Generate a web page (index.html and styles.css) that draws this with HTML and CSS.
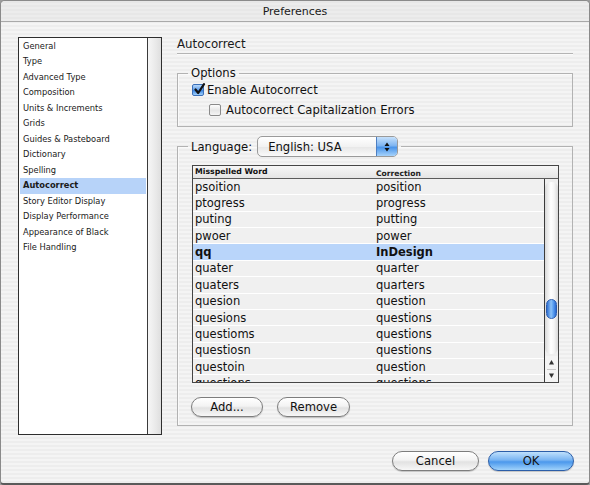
FILE: index.html
```html
<!DOCTYPE html>
<html>
<head>
<meta charset="utf-8">
<link rel="stylesheet" href="styles.css">
</head>
<body>
<div class="window">
  <div class="titlebar">Preferences</div>
  <div class="content">
    <div class="main">
      <div class="sidebar">
        <ul class="navlist">
          <li>General</li>
          <li>Type</li>
          <li>Advanced Type</li>
          <li>Composition</li>
          <li>Units &amp; Increments</li>
          <li>Grids</li>
          <li>Guides &amp; Pasteboard</li>
          <li>Dictionary</li>
          <li>Spelling</li>
          <li class="selected">Autocorrect</li>
          <li>Story Editor Display</li>
          <li>Display Performance</li>
          <li>Appearance of Black</li>
          <li>File Handling</li>
        </ul>
        <div class="sidescroll"></div>
      </div>
      <div class="panel">
        <div class="panel-title">Autocorrect</div>
        <fieldset class="group options">
          <legend class="legend-text">Options</legend>
          <div class="check-row">
            <span class="checkbox checked">
              <svg width="13" height="13" viewBox="0 0 13 13"><path d="M2.5 6.5 L5.2 10 L11 1.2" fill="none" stroke="#111" stroke-width="2.2" stroke-linecap="round" stroke-linejoin="round"/></svg>
            </span>
            <span>Enable Autocorrect</span>
          </div>
          <div class="check-row sub">
            <span class="checkbox"></span>
            <span>Autocorrect Capitalization Errors</span>
          </div>
        </fieldset>
        <fieldset class="group lang">
          <legend class="lang-legend">
            <span class="lang-label">Language:</span>
            <span class="select">
              <span class="select-text">English: USA</span>
              <span class="select-arrows">
                <svg width="8" height="12" viewBox="0 0 8 12"><path d="M4 1.5 L6.5 5 L1.5 5 Z M4 10.5 L6.5 7 L1.5 7 Z" fill="#111"/></svg>
              </span>
            </span>
          </legend>
          <div class="table">
            <div class="thead">
              <span class="col1">Misspelled Word</span>
              <span class="col2">Correction</span>
            </div>
            <div class="tbody">
              <div class="rows">
                <div class="row"><span class="col1">psoition</span><span class="col2">position</span></div>
                <div class="row"><span class="col1">ptogress</span><span class="col2">progress</span></div>
                <div class="row"><span class="col1">puting</span><span class="col2">putting</span></div>
                <div class="row"><span class="col1">pwoer</span><span class="col2">power</span></div>
                <div class="row active"><span class="col1">qq</span><span class="col2">InDesign</span></div>
                <div class="row"><span class="col1">quater</span><span class="col2">quarter</span></div>
                <div class="row"><span class="col1">quaters</span><span class="col2">quarters</span></div>
                <div class="row"><span class="col1">quesion</span><span class="col2">question</span></div>
                <div class="row"><span class="col1">quesions</span><span class="col2">questions</span></div>
                <div class="row"><span class="col1">questioms</span><span class="col2">questions</span></div>
                <div class="row"><span class="col1">questiosn</span><span class="col2">questions</span></div>
                <div class="row"><span class="col1">questoin</span><span class="col2">question</span></div>
                <div class="row"><span class="col1">questions</span><span class="col2">questions</span></div>
              </div>
              <div class="vscroll">
                <div class="track">
                  <div class="thumb"></div>
                </div>
                <div class="arrows">
                  <svg width="13" height="26" viewBox="0 0 13 26"><path d="M6.5 4 L9 8.5 L4 8.5 Z" fill="#333"/><path d="M2 13.5 H11" stroke="#c8c8c8" stroke-width="1"/><path d="M6.5 22 L9 17.5 L4 17.5 Z" fill="#333"/></svg>
                </div>
              </div>
            </div>
          </div>
          <div class="btn-row">
            <button class="aqua small">Add...</button>
            <button class="aqua small">Remove</button>
          </div>
        </fieldset>
      </div>
    </div>
    <div class="footer">
      <button class="aqua wide">Cancel</button>
      <button class="aqua wide default">OK</button>
    </div>
  </div>
</div>
</body>
</html>
```

FILE: styles.css
```css
* { box-sizing: border-box; }
html, body { margin: 0; padding: 0; }
body {
  width: 590px;
  height: 485px;
  overflow: hidden;
  background: #9c9c9c;
  font-family: "DejaVu Sans", "Liberation Sans", sans-serif;
  color: #111;
}
.window {
  width: 590px;
  height: 485px;
  border-radius: 5px 5px 4px 4px;
  border: 1px solid #8a8a8a;
  border-bottom: 2px solid #5a5a5a;
  background: repeating-linear-gradient(#ededed 0 2px, #f4f4f4 2px 4px);
  display: flex;
  flex-direction: column;
  overflow: hidden;
}
.titlebar {
  height: 21px;
  flex: none;
  text-align: center;
  font-size: 11px;
  line-height: 21px;
  color: #1a1a1a;
  background: repeating-linear-gradient(#e7e7e7 0 2px, #ececec 2px 4px);
  border-bottom: 1px solid #a9a9a9;
}
.content {
  flex: 1;
  display: flex;
  flex-direction: column;
}
.main {
  display: flex;
  padding: 15px 0 0 17px;
}
.sidebar {
  width: 144px;
  height: 398px;
  border: 1px solid #2e2e2e;
  background: #fff;
  display: flex;
  flex: none;
}
.navlist {
  list-style: none;
  margin: 0;
  padding: 0.5px 1px 0 1px;
  width: 129px;
  border-right: 1px solid #3a3a3a;
}
.navlist li {
  height: 15.5px;
  line-height: 15.5px;
  font-size: 8.3px;
  padding-left: 3px;
  color: #1a1a1a;
  white-space: nowrap;
}
.navlist li.selected {
  background: #b7d3f9;
  font-weight: bold;
}
.sidescroll {
  flex: 1;
  background: linear-gradient(90deg, #f6f6f6, #e9e9e9 60%, #dedede);
}
.panel {
  margin-left: 15px;
  width: 396px;
  display: flex;
  flex-direction: column;
}
.panel-title {
  height: 17px;
  font-size: 11.8px;
  line-height: 14px;
  border-bottom: 1px solid #b4b4b4;
  box-shadow: 0 1px 0 #fafafa;
  color: #1a1a1a;
}
.group {
  margin: 0;
  padding: 0 14px;
  border: 1px solid #b2b2b2;
  box-shadow: inset 1px 1px 0 #fafafa;
  min-width: 0;
}
.options {
  margin-top: 12px;
  padding-bottom: 6px;
}
.legend-text {
  font-size: 11.6px;
  line-height: 14px;
  padding: 0 3px;
  margin-left: -4px;
}
.check-row {
  display: flex;
  align-items: center;
  height: 20px;
  font-size: 11.6px;
  gap: 3px;
  padding-left: 0;
}
.check-row.sub {
  padding-left: 17px;
  gap: 5px;
}
.checkbox {
  width: 12px;
  height: 12px;
  border: 1px solid #8a8a8a;
  border-radius: 2px;
  background: linear-gradient(#fdfdfd, #e6e6e6 55%, #f4f4f4);
  position: relative;
  flex: none;
}
.checkbox.checked {
  border-color: #3b6fb8;
  background: linear-gradient(#b6d8fb, #5f9de9 50%, #3d86e3 55%, #9fd0fb);
}
.checkbox svg {
  position: absolute;
  left: 0;
  top: -2px;
}
.lang {
  margin-top: 9px;
  padding-bottom: 10px;
  height: 290px;
}
.lang-legend {
  display: flex;
  align-items: center;
  padding: 0 3px;
  margin-left: -4px;
  gap: 5px;
}
.lang-label {
  font-size: 11.6px;
}
.select {
  display: flex;
  align-items: center;
  width: 141px;
  height: 21px;
  border: 1px solid #9a9a9a;
  border-radius: 5px;
  background: linear-gradient(#ffffff, #f2f2f2 50%, #e8e8e8 55%, #fafafa);
  overflow: hidden;
}
.select-text {
  flex: 1;
  font-size: 11.6px;
  padding-left: 10px;
}
.select-arrows {
  width: 21px;
  height: 100%;
  display: flex;
  align-items: center;
  justify-content: center;
  border-left: 1px solid #4d7fc2;
  background: linear-gradient(#c6e1fc, #7fb5f1 45%, #4b95ea 55%, #a7d3fb);
}
.table {
  margin-top: 8px;
  border: 1px solid #454545;
  width: 367px;
}
.thead {
  height: 13px;
  display: flex;
  background: linear-gradient(#f6f6f6, #e4e4e4);
  border-bottom: 1px solid #5a5a5a;
  font-size: 7.8px;
  line-height: 12px;
  position: relative;
}
.thead .col1 {
  width: 183px;
  font-weight: bold;
  padding-left: 2px;
}
.thead .col2 {
  padding-top: 2px;
  line-height: 12px;
  font-weight: bold;
  font-size: 7.6px;
  color: #222;
}
.tbody {
  display: flex;
  height: 203px;
}
.rows {
  flex: 1;
  overflow: hidden;
  background: #f3f3f3;
}
.row {
  display: flex;
  height: 16.36px;
  align-items: center;
  font-size: 11.5px;
  background: #f0f0f0;
  border-bottom: 1.5px solid #fff;
}
.row .col1 {
  width: 183px;
  padding-left: 2px;
}
.row.active {
  background: #b9d5fa;
  font-weight: bold;
}
.vscroll {
  width: 14px;
  border-left: 1px solid #3a3a3a;
  background: #efefef;
  display: flex;
  flex-direction: column;
}
.track {
  flex: 1;
  margin: 3px 0 2px;
  border-radius: 6px;
  background: linear-gradient(90deg, #d9d9d9, #ffffff 45%, #f5f5f5 70%, #d9d9d9);
  position: relative;
}
.thumb {
  position: absolute;
  left: 1px;
  right: 1px;
  top: 117px;
  height: 20px;
  border-radius: 6px;
  border: 1px solid #2d5eb0;
  background: linear-gradient(90deg, #2f6fd2, #8cc2f7 45%, #5a9ef0 70%, #2b6ad0);
}
.arrows {
  height: 26px;
  flex: none;
  background: #f4f4f4;
}
.arrows svg { display: block; }
.btn-row {
  display: flex;
  gap: 14px;
  margin-top: 14px;
  margin-left: -1px;
}
.aqua {
  font-family: "DejaVu Sans", "Liberation Sans", sans-serif;
  font-size: 11.6px;
  color: #111;
  height: 20px;
  padding: 0;
  border: 1px solid #7d7d7d;
  border-radius: 10px;
  background: linear-gradient(#ffffff, #f3f3f3 45%, #e2e2e2 55%, #f7f7f7);
  box-shadow: 0 1px 1px rgba(0,0,0,0.2);
}
.aqua.small { width: 72px; }
.aqua.small + .aqua.small { width: 73px; }
.footer {
  display: flex;
  justify-content: flex-end;
  gap: 9px;
  padding: 16px 15px 0 0;
}
.aqua.wide { width: 87px; }
.aqua.default {
  width: 86px;
  border-color: #2c5ea8;
  background: linear-gradient(#bfe0fc, #78b4f2 45%, #4b98ec 55%, #9fd2fb);
}
```
